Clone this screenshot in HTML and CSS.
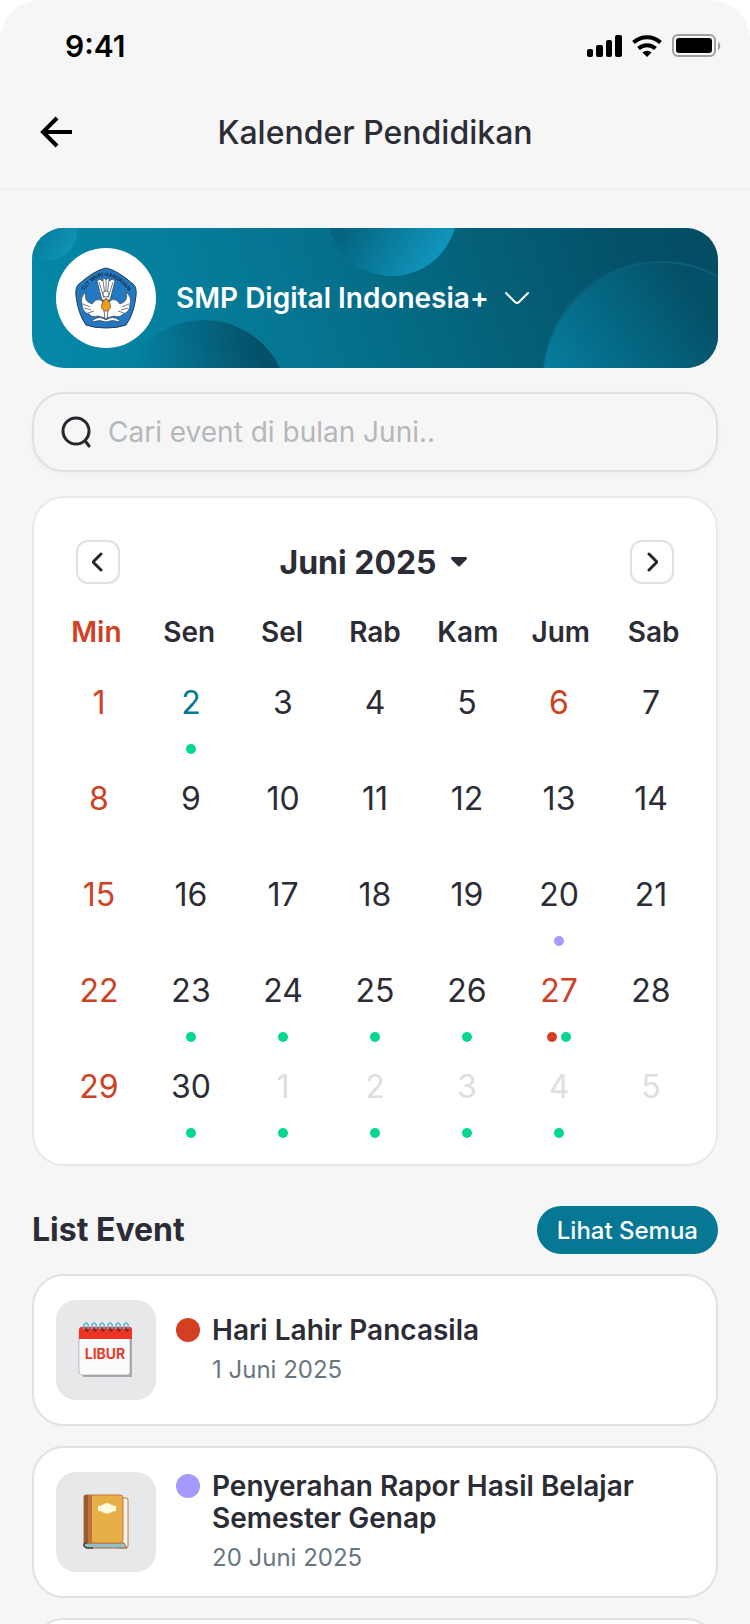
FILE: index.html
```html
<!DOCTYPE html>
<html lang="id">
<head>
    <meta charset="UTF-8">
    <meta name="viewport" content="width=device-width, initial-scale=1">
    <title>Kalender Pendidikan</title>
    <link rel="stylesheet" href="styles.css">
</head>
<body>
<div class="screen">

    <div class="status-bar">
        <span class="clock">9:41</span>
        <svg class="status-icons" width="134" height="24" viewBox="0 0 134 24" aria-hidden="true">
            <rect x="0" y="15" width="6" height="8" rx="2"/>
            <rect x="9" y="11" width="7" height="12" rx="2"/>
            <rect x="19" y="6" width="6" height="17" rx="2"/>
            <rect x="28" y="1" width="7" height="22" rx="2"/>
            <path d="M60 23l-4.500-4.500a6.500 6.500 0 0 1 9 0z"/>
            <path d="M51.500 14.500a12.500 12.500 0 0 1 17 0M46.500 8.500a20 20 0 0 1 27 0" fill="none" stroke="#000" stroke-width="4"/>
            <rect x="86" y="1" width="42" height="21" rx="5" fill="none" stroke="#a0a0a0" stroke-width="2"/>
            <rect x="89" y="4" width="36" height="15" rx="3"/>
            <path d="M131 8c3 1 3 7 0 8z" fill="#a0a0a0"/>
        </svg>
    </div>

    <header class="top-bar">
        <button type="button" class="back" aria-label="Kembali">
            <svg width="32" height="32" viewBox="0 0 32 32"><path d="M32 16H3M17 2L3 16l14 14" fill="none" stroke="#000" stroke-width="4"/></svg>
        </button>
        <h1>Kalender Pendidikan</h1>
    </header>

    <main>
        <button type="button" class="school">
            <svg class="school-bg" viewBox="0 0 686 140" preserveAspectRatio="xMidYMid slice" aria-hidden="true">
                <defs>
                    <linearGradient id="light" x1="0.200" y1="0.500" x2="0.850" y2="0.900">
                        <stop offset="0" stop-color="#05637d"/>
                        <stop offset="1" stop-color="#1097bf"/>
                    </linearGradient>
                    <linearGradient id="small" x1="0.200" y1="0.400" x2="0.850" y2="0.900">
                        <stop offset="0" stop-color="#067592"/>
                        <stop offset="1" stop-color="#0e94b8"/>
                    </linearGradient>
                    <linearGradient id="dark" x1="0.050" y1="0.400" x2="0.850" y2="0.250">
                        <stop offset="0" stop-color="#0586a6"/>
                        <stop offset="1" stop-color="#055069"/>
                    </linearGradient>
                    <linearGradient id="fade" x1="0.100" y1="0.600" x2="0.700" y2="0.200">
                        <stop offset="0" stop-color="#067e9f"/>
                        <stop offset="1" stop-color="#045067"/>
                    </linearGradient>
                </defs>
                <circle cx="16" cy="3" r="29" fill="url(#small)"/>
                <circle cx="360" cy="-17" r="65" fill="url(#light)"/>
                <circle cx="172" cy="176" r="84" fill="url(#dark)"/>
                <circle cx="629" cy="153" r="119" fill="url(#fade)" stroke="#0a6078" stroke-width="2"/>
            </svg>
            <span class="school-logo">
                <svg width="62" height="62" viewBox="0 0 62 62" aria-hidden="true">
                    <path d="M31 1Q42 3 58 17Q62 20 61 29Q59 47 51 58Q43 61 31 61Q19 61 11 58Q3 47 1 29Q0 20 4 17Q20 3 31 1Z" fill="#2478bf" stroke="#243c50"/>
                    <path id="arc" d="M9 24Q30 -7 55 26" fill="none"/>
                    <text class="logo-text"><textPath href="#arc">TUT WURI HANDAYANI</textPath></text>
                    <g fill="#fff" stroke="#37434c" stroke-width="0.700">
                        <path d="M27 33L22 14l3-2 2 2 2-3 2 2 2-2 2 3 2-2 3 2-5 19z"/>
                        <path d="M24 15l5 16M28 13l2 16M31 13v14M34 13l-2 16M38 15l-5 16" fill="none"/>
                        <path d="M27 34Q22 30 17 37Q8 34 11 25Q5 30 7 37Q7 45 14 47Q17 51 23 49L30 51L31 38zM35 34Q40 30 45 37Q54 34 51 25Q57 30 55 37Q55 45 48 47Q45 51 39 49L32 51L31 38z"/>
                        <path d="M8 37l7 3M9 41l7 2M13 46l6-2M54 37l-7 3M53 41l-7 2M49 46l-6-2" fill="none"/>
                        <path d="M31 53q-6-5-13 0l-1 2q8-3 14 0 6-3 14 0l-1-2q-7-5-13 0z"/>
                        <circle cx="31" cy="27" r="3"/>
                        <path d="M29 43h4l-1 9h-2z"/>
                    </g>
                    <path d="M31 31q8 8 2 13h-4q-6-5 2-13z" fill="#f19a1b" stroke="#704b24" stroke-width="0.700"/>
                </svg>
            </span>
            <span class="school-name">SMP Digital Indonesia+</span>
            <svg width="24" height="14" viewBox="0 0 24 14" aria-hidden="true"><path d="M1 2l9 9q2 2 4 0l9-9" fill="none" stroke="#fff" stroke-width="2" stroke-linecap="round"/></svg>
        </button>

        <label class="search">
            <svg width="32" height="32" viewBox="0 0 32 32" aria-hidden="true"><g fill="none" stroke="#25292e" stroke-width="3" stroke-linecap="round"><circle cx="16" cy="15" r="13"/><path d="M26 26l3 4"/></g></svg>
            <input type="search" placeholder="Cari event di bulan Juni.." aria-label="Cari event">
        </label>

        <section class="card calendar">
            <div class="month-bar">
                <button type="button" class="nav" aria-label="Bulan sebelumnya">
                    <svg width="12" height="20" viewBox="0 0 12 20"><path d="M9 2L1 10l8 8" fill="none" stroke="#25262c" stroke-width="3" stroke-linecap="round" stroke-linejoin="round"/></svg>
                </button>
                <button type="button" class="month">Juni 2025
                    <svg width="20" height="10" viewBox="0 0 20 10" aria-hidden="true"><path d="M1 0h14q2 1 0 3L9 9Q8 10 7 9L1 3Q-1 1 1 0z" fill="#2b2c35"/></svg>
                </button>
                <button type="button" class="nav" aria-label="Bulan berikutnya">
                    <svg width="12" height="20" viewBox="0 0 12 20"><path d="M3 2l8 8-8 8" fill="none" stroke="#25262c" stroke-width="3" stroke-linecap="round" stroke-linejoin="round"/></svg>
                </button>
            </div>
            <table>
                <thead>
                    <tr><th class="red">Min</th><th>Sen</th><th>Sel</th><th>Rab</th><th>Kam</th><th>Jum</th><th>Sab</th></tr>
                </thead>
                <tbody>
                    <tr>
                        <td class="red">1</td>
                        <td class="today">2<div class="dots"><i class="dot green"></i></div></td>
                        <td>3</td>
                        <td>4</td>
                        <td>5</td>
                        <td class="red">6</td>
                        <td>7</td>
                    </tr>
                    <tr>
                        <td class="red">8</td>
                        <td>9</td>
                        <td>10</td>
                        <td>11</td>
                        <td>12</td>
                        <td>13</td>
                        <td>14</td>
                    </tr>
                    <tr>
                        <td class="red">15</td>
                        <td>16</td>
                        <td>17</td>
                        <td>18</td>
                        <td>19</td>
                        <td>20<div class="dots"><i class="dot purple"></i></div></td>
                        <td>21</td>
                    </tr>
                    <tr>
                        <td class="red">22</td>
                        <td>23<div class="dots"><i class="dot green"></i></div></td>
                        <td>24<div class="dots"><i class="dot green"></i></div></td>
                        <td>25<div class="dots"><i class="dot green"></i></div></td>
                        <td>26<div class="dots"><i class="dot green"></i></div></td>
                        <td class="red">27<div class="dots"><i class="dot holiday"></i><i class="dot green"></i></div></td>
                        <td>28</td>
                    </tr>
                    <tr>
                        <td class="red">29</td>
                        <td>30<div class="dots"><i class="dot green"></i></div></td>
                        <td class="other">1<div class="dots"><i class="dot green"></i></div></td>
                        <td class="other">2<div class="dots"><i class="dot green"></i></div></td>
                        <td class="other">3<div class="dots"><i class="dot green"></i></div></td>
                        <td class="other">4<div class="dots"><i class="dot green"></i></div></td>
                        <td class="other">5</td>
                    </tr>
                </tbody>
            </table>
        </section>

        <div class="list-head">
            <h2>List Event</h2>
            <button type="button" class="see-all">Lihat Semua</button>
        </div>

        <ul class="events">
            <li class="card event">
                <div class="thumb">
                    <svg width="56" height="56" viewBox="0 0 56 56" aria-hidden="true">
                        <path d="M5 6h47a2 2 0 0 1 2 2v47H5z" fill="#a9abae"/>
                        <path d="M1 8q0-3 3-3h45q3 0 3 3v42q0 3-3 3H4q-3 0-3-3z" fill="#fcfcfc" stroke="#92989b" stroke-width="0.600"/>
                        <path d="M1 17V8q0-3 3-3h48q2 0 2 3v9z" fill="#ee3425"/>
                        <g fill="#8f2923"><circle cx="9" cy="8" r="2"/><circle cx="17" cy="8" r="2"/><circle cx="25" cy="8" r="2"/><circle cx="33" cy="8" r="2"/><circle cx="41" cy="8" r="2"/><circle cx="49" cy="8" r="2"/></g>
                        <path d="M6 7q-1-5 2-6 3 0 2 6M14 7q-1-5 2-6 3 0 2 6M22 7q-1-5 2-6 3 0 2 6M30 7q-1-5 2-6 3 0 2 6M38 7q-1-5 2-6 3 0 2 6M46 7q-1-5 2-6 3 0 2 6" fill="none" stroke="#62b5da" stroke-width="1.600"/>
                        <text class="thumb-text" x="27" y="37" text-anchor="middle">LIBUR</text>
                    </svg>
                </div>
                <span class="mark holiday"></span>
                <h3>Hari Lahir Pancasila</h3>
                <p>1 Juni 2025</p>
            </li>
            <li class="card event">
                <div class="thumb">
                    <svg width="46" height="56" viewBox="0 0 46 56" aria-hidden="true">
                        <path d="M35 4h8q2 0 2 2v46q0 2-2 2H34z" fill="#f3f5f7" stroke="#c87330"/>
                        <path d="M4 49h37l3 5H3q-3-2-2-4z" fill="#91bfca" stroke="#a46a3c"/>
                        <path d="M1 3q0-2 2-2h34q3 0 3 3v42q0 3-3 3H4q-2 0-3 2z" fill="#e8ae48" stroke="#c87330"/>
                        <path d="M1 3q0-2 2-2h6v48H4q-2 0-3 2z" fill="#bd7436"/>
                        <path d="M1 3q0-2 2-2h2v48q-3 0-4 2z" fill="#965a36"/>
                        <path d="M10 54H4q-3-1-3-3 0-2 3-2" fill="none" stroke="#4a4646" stroke-width="1.500"/>
                        <path d="M15 12q4 0 6-2 3-2 6 0 2 2 6 2v5q-4 0-6 2-3 1-6 0-2-2-6-2z" fill="#fff9df"/>
                    </svg>
                </div>
                <span class="mark purple"></span>
                <h3>Penyerahan Rapor Hasil Belajar Semester Genap</h3>
                <p>20 Juni 2025</p>
            </li>
            <li class="card event"></li>
        </ul>
    </main>
</div>
</body>
</html>
```

FILE: styles.css
```css
* {
    box-sizing: border-box;
}

body {
    margin: 0;
    background: #fff;
    color: #2b2c35;
    font-family: Inter, "Liberation Sans", sans-serif;
}

h1, h2, h3, p, ul {
    margin: 0;
    padding: 0;
}

button {
    border: none;
    padding: 0;
    background: none;
    color: inherit;
    font-family: inherit;
    cursor: pointer;
}

.screen {
    height: 100vh;
    overflow: hidden;
    background: #f6f6f6;
    border-radius: 40px 40px 0 0;
}

/* status bar + header */
.status-bar {
    display: flex;
    justify-content: space-between;
    align-items: center;
    padding: 28px 29px 0 65px;
}

.clock {
    color: #000;
    font-size: 30px;
    font-weight: 600;
    line-height: 36px;
}

.top-bar {
    display: grid;
    grid-template-columns: 32px 1fr 32px;
    align-items: center;
    padding: 44px 40px 30px;
    border-bottom: 2px solid #eeeeee;
}

.back {
    height: 32px;
    margin-bottom: 2px;
}

.top-bar h1 {
    font-size: 32px;
    font-weight: 500;
    line-height: 50px;
    text-align: center;
}

main {
    padding: 38px 32px 0;
}

.school {
    position: relative;
    display: flex;
    align-items: center;
    gap: 16px;
    width: 100%;
    padding: 20px 24px;
    overflow: hidden;
    border-radius: 32px;
    background: linear-gradient(72deg, #0589a9 0%, #057f9d 22%, #05708b 46%, #045f77 68%, #045067 88%, #034d63 100%);
    color: #fff;
}

/* bubbles behind the school name */
.school-bg {
    position: absolute;
    left: 0;
    top: 0;
    width: 100%;
    height: 100%;
}

.school > :not(.school-bg) {
    position: relative;
}

.school-logo {
    display: flex;
    align-items: center;
    justify-content: center;
    width: 100px;
    height: 100px;
    margin-right: 4px;
    border-radius: 50%;
    background: #fff;
}

.logo-text {
    fill: #16242f;
    font-size: 5px;
    font-weight: 600;
}

.school-name {
    font-size: 28px;
    font-weight: 600;
}

.search {
    display: flex;
    align-items: center;
    gap: 16px;
    height: 80px;
    margin-top: 24px;
    padding: 0 26px;
    border: 2px solid #dfe0e0;
    border-radius: 32px;
    box-shadow: 0 2px 4px rgba(0, 0, 0, 0.04);
}

.search input {
    flex: 1;
    min-width: 0;
    padding: 0;
    border: none;
    outline: none;
    background: none;
    color: #2b2c35;
    font-family: inherit;
    font-size: 28px;
}

.search input::placeholder {
    color: #b4b8bb;
}

.card {
    border: 2px solid #e0e1e1;
    border-radius: 32px;
    background: #fff;
}

/* calendar */
.calendar {
    margin-top: 24px;
    padding-top: 42px;
    border-color: #e8e9e9;
}

.month-bar {
    display: flex;
    justify-content: space-between;
    align-items: center;
    padding: 0 42px;
}

.nav {
    display: flex;
    align-items: center;
    justify-content: center;
    width: 44px;
    height: 44px;
    border: 2px solid #e0e1e1;
    border-radius: 12px;
}

.month {
    display: flex;
    align-items: center;
    gap: 14px;
    font-size: 32px;
    font-weight: 700;
}

table, thead, tbody {
    display: block;
}

tr {
    display: grid;
    grid-template-columns: repeat(7, 1fr);
}

thead {
    padding: 28px 16px 32px;
}

tbody {
    padding: 0 19px;
}

th {
    padding: 0;
    font-size: 28px;
    font-weight: 600;
    line-height: 40px;
    text-align: center;
}

td {
    height: 96px;
    padding: 0;
    font-size: 32px;
    line-height: 38px;
    text-align: center;
}

.red {
    color: #d04023;
}

.today {
    color: #067894;
}

.other {
    color: #dededf;
}

.dots {
    display: flex;
    justify-content: center;
    gap: 4px;
    margin-top: 22px;
}

.dot {
    width: 10px;
    height: 10px;
    border-radius: 50%;
}

.green {
    background: #05d78f;
}

.purple {
    background: #a59aff;
}

.holiday {
    background: #d43f21;
}

/* event list */
.list-head {
    display: flex;
    justify-content: space-between;
    align-items: center;
    margin: 40px 0 20px;
}

.list-head h2 {
    font-size: 32px;
    font-weight: 700;
    line-height: 48px;
}

.see-all {
    height: 48px;
    padding: 0 20px;
    border-radius: 24px;
    background: #067894;
    color: #fff;
    font-size: 24px;
    font-weight: 500;
}

.events {
    display: flex;
    flex-direction: column;
    gap: 20px;
    list-style: none;
}

/* title and date sit in the middle rows, the mark lines up with the title */
.event {
    display: grid;
    grid-template-columns: 120px 36px 1fr;
    grid-template-rows: 1fr auto auto 1fr;
    min-height: 152px;
    padding: 22px;
}

.thumb {
    display: flex;
    grid-row: 1 / -1;
    align-self: center;
    align-items: center;
    justify-content: center;
    width: 100px;
    height: 100px;
    border-radius: 20px;
    background: #e6e8ea;
}

.thumb-text {
    fill: #e93b2c;
    font-size: 14px;
    font-weight: 700;
}

.mark {
    grid-column: 2;
    grid-row: 2;
    width: 24px;
    height: 24px;
    margin-top: 4px;
    border-radius: 50%;
}

.event h3 {
    grid-column: 3;
    grid-row: 2;
    font-size: 28px;
    font-weight: 600;
    line-height: 32px;
}

.event p {
    grid-column: 3;
    grid-row: 3;
    margin-top: 8px;
    color: #68777f;
    font-size: 24px;
    line-height: 32px;
}
```
